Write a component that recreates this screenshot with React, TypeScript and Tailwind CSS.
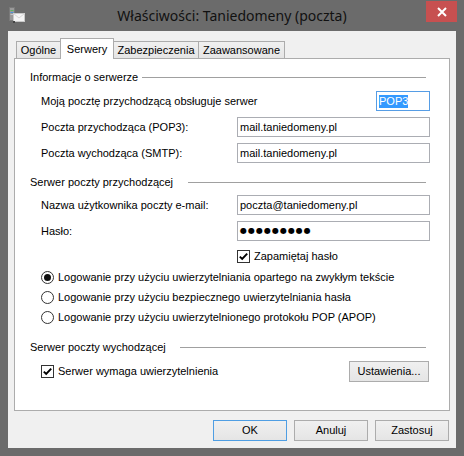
import React from 'react';

const ui = "font-['Liberation_Sans',Arial,sans-serif] text-[11px] text-black";

// Window icon: small server tower with a letter in front
const MailServerIcon = () => (
  <svg width="17" height="18" viewBox="0 0 17 18">
    <rect x="0.5" y="0.5" width="5" height="13" fill="#9a9a9a" stroke="#7a7a7a" />
    <rect x="1.5" y="3" width="3" height="1" fill="#5cb85c" />
    <rect x="1.5" y="5" width="3" height="1" fill="#4a8fd8" />
    <rect x="1.5" y="7" width="3" height="1" fill="#c8c8c8" />
    <rect x="4.5" y="6.5" width="11" height="8" fill="#f4f4f4" stroke="#c9c9c9" />
    <path d="M4.5 6.5 L10 11 L15.5 6.5" fill="none" stroke="#d6d6d6" />
    <rect x="4" y="14" width="2" height="2" fill="#444" />
  </svg>
);

const TextBox = ({ value, focused = false, width = 'w-[193px]' }: { value: string; focused?: boolean; width?: string }) => (
  <div
    className={`${width} h-[20px] bg-white border flex items-center px-[2px] ${focused ? 'border-[#569de5]' : 'border-[#abadb3]'}`}
  >
    {focused ? <span className="bg-[#3399ff] text-white leading-[13px]">{value}</span> : <span>{value}</span>}
  </div>
);

// Group caption followed by a separator line that starts at a fixed column
const GroupHeader = ({ title, labelWidth, className = '' }: { title: string; labelWidth: string; className?: string }) => (
  <div className={`flex items-center h-[14px] pr-[4px] ${className}`}>
    <span className={`${labelWidth} shrink-0 whitespace-nowrap`}>{title}</span>
    <div className="flex-1 h-px bg-[#a0a0a0]" />
  </div>
);

const CheckBox = ({ label }: { label: string }) => (
  <div className="flex items-center h-[14px]">
    <div className="w-[13px] h-[13px] border border-[#333] bg-white flex items-center justify-center">
      <svg width="11" height="11" viewBox="0 0 11 11">
        <path d="M1.8 5.6 L4.2 8 L9.2 2.6" fill="none" stroke="#000" strokeWidth="1.9" />
      </svg>
    </div>
    <span className="ml-[4px]">{label}</span>
  </div>
);

const Radio = ({ label, checked = false, className = '' }: { label: string; checked?: boolean; className?: string }) => (
  <div className={`flex items-center h-[14px] ${className}`}>
    <div className="w-[13px] h-[13px] rounded-full border border-[#333] bg-white flex items-center justify-center">
      {checked && <div className="w-[7px] h-[7px] rounded-full bg-[#111]" />}
    </div>
    <span className="ml-[4px]">{label}</span>
  </div>
);

const Button = ({ label, primary = false, className = '' }: { label: string; primary?: boolean; className?: string }) => (
  <div
    className={`h-[21px] flex items-center justify-center border bg-linear-to-b from-[#f0f0f0] to-[#e5e5e5] ${
      primary ? 'border-[#4f9ee3]' : 'border-[#acacac]'
    } ${className}`}
  >
    {label}
  </div>
);

const tabs = [
  { name: 'Ogólne', w: 'w-[44px]', border: 'border-l border-t' },
  { name: 'Serwery', w: 'w-[54px]', border: 'border-l border-t border-r', active: true },
  { name: 'Zabezpieczenia', w: 'w-[85px]', border: 'border-t border-r' },
  { name: 'Zaawansowane', w: 'w-[86px]', border: 'border-t border-r' },
];

const Row = ({ label, children, className = '' }: { label: string; children: React.ReactNode; className?: string }) => (
  <div className={`flex items-center h-[20px] pl-[11px] ${className}`}>
    <span className="w-[196px] shrink-0">{label}</span>
    {children}
  </div>
);

export default function App() {
  return (
    <div className={`w-[464px] h-[456px] bg-[#6b6b6b] flex flex-col ${ui}`}>
      {/* title bar */}
      <div className="h-[31px] grid grid-cols-[64px_1fr_64px] shrink-0">
        <div className="pl-[9px] pt-[7px]">
          <MailServerIcon />
        </div>
        <div className="flex justify-center pt-[6px] font-['Noto_Sans',sans-serif] text-[14px] text-[#111] leading-[20px]">
          Właściwości: Taniedomeny (poczta)
        </div>
        <div className="flex justify-end pr-[7px]">
          <div className="w-[31px] h-[21px] mt-[1px] bg-[#c75050] flex items-center justify-center">
            <svg width="10" height="10" viewBox="0 0 10 10">
              <path d="M1 1 L9 9 M9 1 L1 9" stroke="#fff" strokeWidth="2" />
            </svg>
          </div>
        </div>
      </div>

      {/* client area */}
      <div className="mx-[8px] h-[417px] bg-[#f0f0f0] flex flex-col">
        <div className="flex items-end h-[27px] pl-[8px] pt-[7px]">
          {tabs.map((t) =>
            t.active ? (
              <div
                key={t.name}
                className={`${t.w} h-[21px] -mb-px relative z-10 bg-white border-[#acacac] ${t.border} flex items-center justify-center`}
              >
                {t.name}
              </div>
            ) : (
              <div
                key={t.name}
                className={`${t.w} h-[17px] bg-linear-to-b from-[#f0f0f0] to-[#e5e5e5] border-[#acacac] ${t.border} flex items-center justify-center`}
              >
                {t.name}
              </div>
            )
          )}
        </div>

        <div className="ml-[6px] w-[436px] h-[353px] bg-white border border-[#acacac] pl-[15px] pr-[19px] flex flex-col">
          <GroupHeader title="Informacje o serwerze" labelWidth="w-[112px]" className="mt-[11px]" />
          <div className="flex items-center justify-between h-[20px] pl-[11px] mt-[7px]">
            <span>Moją pocztę przychodzącą obsługuje serwer</span>
            <TextBox value="POP3" focused width="w-[54px]" />
          </div>
          <Row label="Poczta przychodząca (POP3):" className="mt-[6px]">
            <TextBox value="mail.taniedomeny.pl" />
          </Row>
          <Row label="Poczta wychodząca (SMTP):" className="mt-[6px]">
            <TextBox value="mail.taniedomeny.pl" />
          </Row>

          <GroupHeader title="Serwer poczty przychodzącej" labelWidth="w-[158px]" className="mt-[12px]" />
          <Row label="Nazwa użytkownika poczty e-mail:" className="mt-[6px]">
            <TextBox value="poczta@taniedomeny.pl" />
          </Row>
          <Row label="Hasło:" className="mt-[6px]">
            <div className="w-[193px] h-[20px] bg-white border border-[#abadb3] flex items-center px-[2px] font-['DejaVu_Sans',sans-serif] text-[8px] tracking-[1px]">
              ●●●●●●●●●
            </div>
          </Row>
          <div className="pl-[207px] mt-[8px]">
            <CheckBox label="Zapamiętaj hasło" />
          </div>
          <div className="pl-[11px] flex flex-col">
            <Radio label="Logowanie przy użyciu uwierzytelniania opartego na zwykłym tekście" checked className="mt-[7px]" />
            <Radio label="Logowanie przy użyciu bezpiecznego uwierzytelniania hasła" className="mt-[6px]" />
            <Radio label="Logowanie przy użyciu uwierzytelnionego protokołu POP (APOP)" className="mt-[6px]" />
          </div>

          <GroupHeader title="Serwer poczty wychodzącej" labelWidth="w-[150px]" className="mt-[16px]" />
          <div className="flex items-center justify-between h-[20px] pl-[11px] mt-[7px] pr-px">
            <CheckBox label="Serwer wymaga uwierzytelnienia" />
            <Button label="Ustawienia..." className="w-[80px] h-[20px]" />
          </div>
        </div>

        <div className="flex justify-end gap-[7px] pr-[7px] mt-[9px]">
          <Button label="OK" primary className="w-[74px]" />
          <Button label="Anuluj" className="w-[74px]" />
          <Button label="Zastosuj" className="w-[74px]" />
        </div>
      </div>
    </div>
  );
}
